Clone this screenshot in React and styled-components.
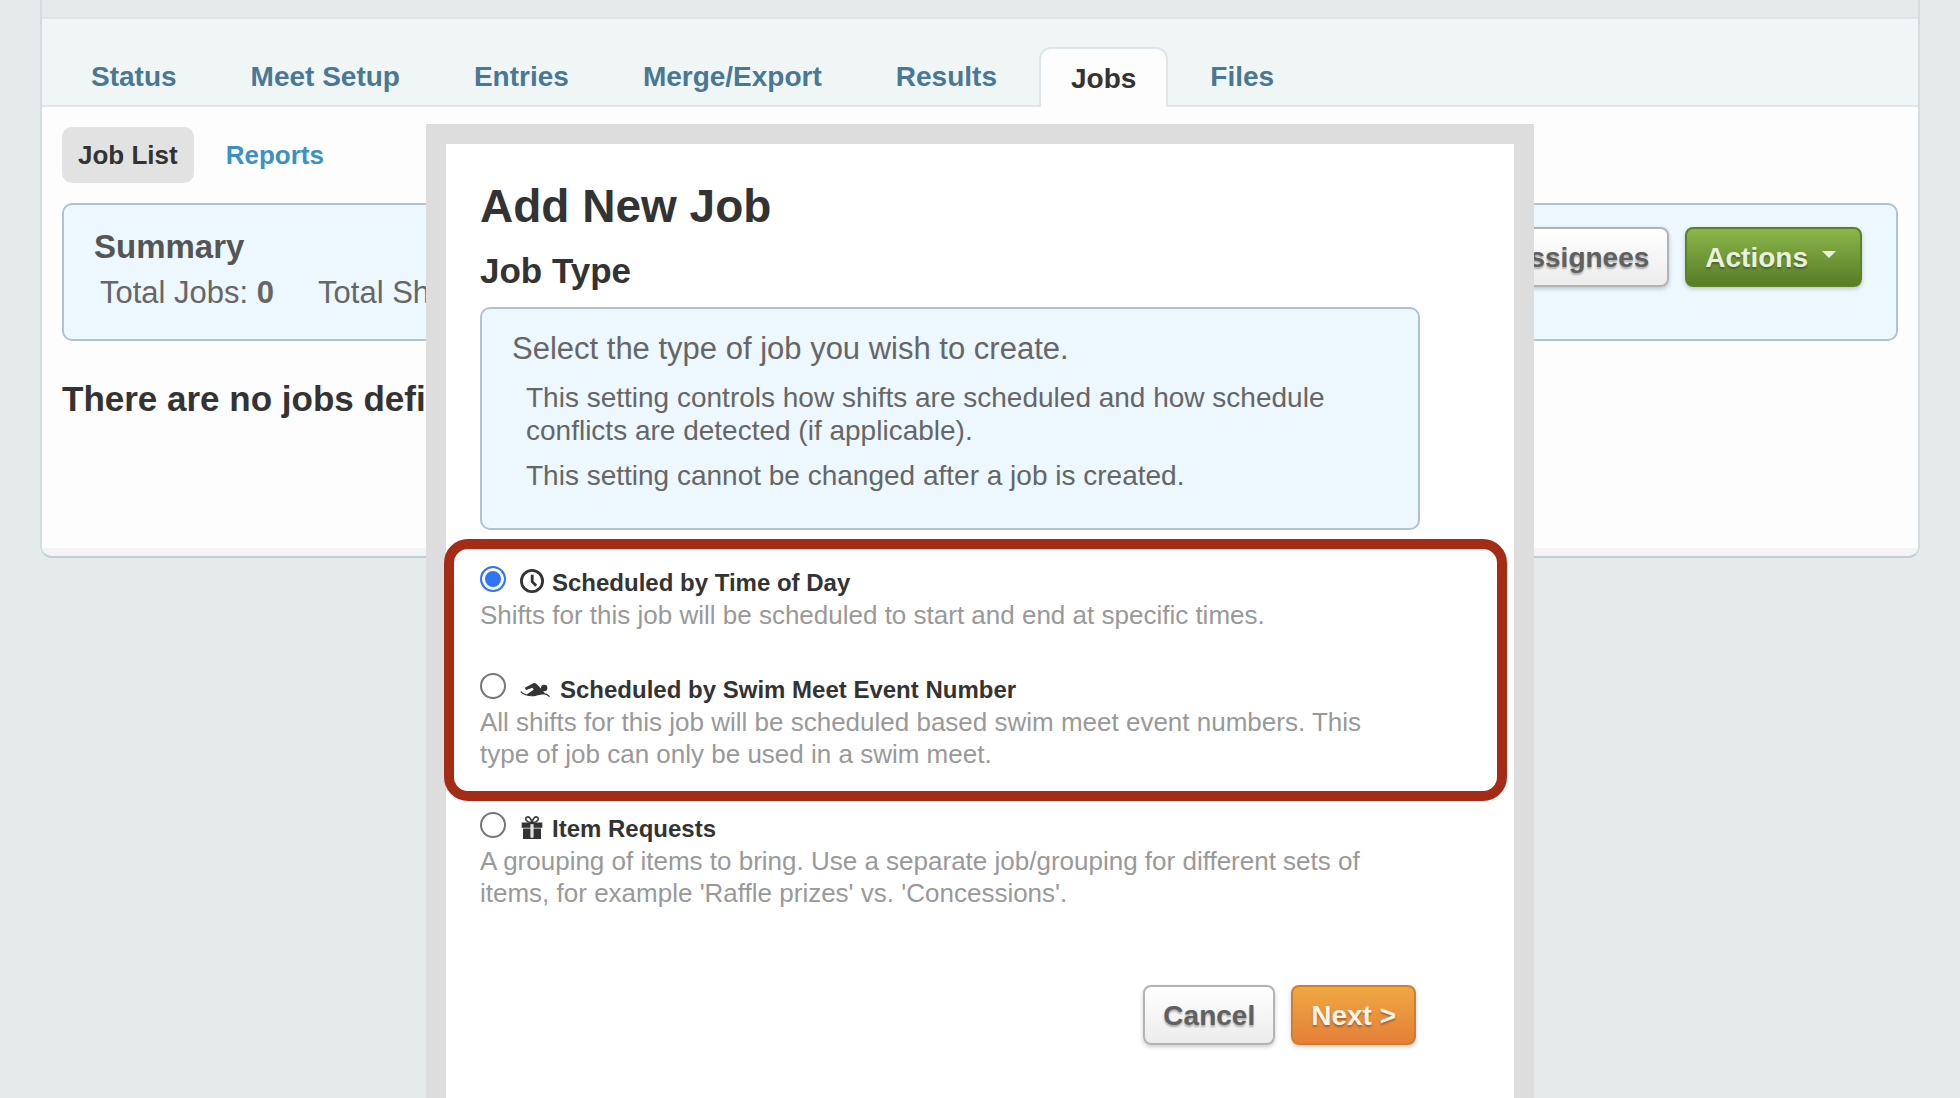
import React, { useState } from "react";
import styled, { createGlobalStyle, css } from "styled-components";

const GlobalStyle = createGlobalStyle`
  *, *::before, *::after { box-sizing: border-box; }
  body {
    margin: 0;
    background: #e5ebea;
    color: #333;
    font-family: "Helvetica Neue", "Liberation Sans", Arial, sans-serif;
  }
  h1, h2, h3, p { margin: 0; }
`;

const Page = styled.div`
  padding: 0 40px;
`;

const Panel = styled.main`
  border: 2px solid #d2dce2;
  border-top: 0;
  border-bottom-color: #c0cfd6;
  border-radius: 0 0 12px 12px;
  background: #fdfdfd;
  overflow: hidden;
`;

const HeaderStrip = styled.div`
  height: 17px;
  background: #e5ebea;
`;

const TabBar = styled.nav`
  display: flex;
  align-items: flex-end;
  gap: 10px;
  padding: 28px 17px 0;
  border-top: 2px solid #dfe5e9;
  border-bottom: 2px solid #dfe5e9;
  background: #f0f6f6;
`;

const Tab = styled.a`
  margin-bottom: -2px;
  padding: 12px 30px 14px;
  border: 2px solid transparent;
  border-bottom: 0;
  border-radius: 12px 12px 0 0;
  color: #497894;
  font-size: 28px;
  font-weight: 700;
  line-height: 32px;
  text-decoration: none;
  white-space: nowrap;
  ${(p) =>
    p.$active &&
    css`
      padding: 14px 30px 12px;
      border-color: #dfe5e9;
      background: #fdfdfd;
      color: #333;
    `}
`;

const Content = styled.div`
  padding: 20px 20px 127px;
`;

const SubNav = styled.nav`
  display: flex;
  gap: 16px;
  margin-bottom: 20px;
`;

const SubLink = styled.a`
  padding: 12px 16px;
  border-radius: 10px;
  background: ${(p) => (p.$active ? "#e2e2e2" : "transparent")};
  color: ${(p) => (p.$active ? "#333" : "#3b92c2")};
  font-size: 26px;
  font-weight: 700;
  line-height: 32px;
  text-decoration: none;
`;

const infoSurface = css`
  border: 2px solid #b0c3d1;
  border-radius: 10px;
  background: #ecf7fe;
`;

const Summary = styled.section`
  ${infoSurface}
  display: flex;
  justify-content: space-between;
  align-items: flex-start;
  padding: 22px 34px 26px 30px;
`;

const SummaryTitle = styled.h3`
  margin-bottom: 6px;
  color: #555;
  font-size: 33px;
  line-height: 40px;
`;

const Totals = styled.div`
  display: flex;
  gap: 44px;
  padding-left: 6px;
  color: #666;
  font-size: 31px;
  line-height: 40px;
`;

const SummaryActions = styled.div`
  display: flex;
  gap: 16px;
`;

const tones = {
  plain: css`
    border-color: #b3b3b3;
    background: linear-gradient(#fff, #ececec);
    color: #606060;
  `,
  green: css`
    border-color: #5a8327;
    background: linear-gradient(#8bb64a, #577d27);
    color: #e9f0dd;
  `,
  orange: css`
    border-color: #cd7f2e;
    background: linear-gradient(#efa842, #e47f38);
    color: #fef3e8;
  `,
};

const Button = styled.button`
  display: flex;
  align-items: center;
  gap: 14px;
  padding: 15px 18px 13px;
  border: 2px solid;
  border-radius: 8px;
  box-shadow: 0 2px 4px rgba(0, 0, 0, 0.2);
  font: 700 28px/28px "Helvetica Neue", "Liberation Sans", Arial, sans-serif;
  text-shadow: 0 2px 2px rgba(0, 0, 0, 0.3);
  cursor: pointer;
  ${(p) => tones[p.$tone]}
`;

const Caret = styled.span`
  margin: 0 6px 8px 0;
  border: 7px solid transparent;
  border-top-color: currentColor;
  border-bottom: 0;
`;

const EmptyMessage = styled.h2`
  margin-top: 36px;
  font-size: 35px;
  line-height: 44px;
`;

const PanelFoot = styled.div`
  height: 8px;
  background: #f4f4f4;
`;

const Overlay = styled.div`
  position: fixed;
  inset: 0;
  display: flex;
  justify-content: center;
  align-items: flex-start;
  padding-top: 124px;
  overflow-y: auto;
  scrollbar-width: none;
`;

const Dialog = styled.form`
  width: min(1108px, 100%);
  padding: 34px 94px 80px 34px;
  border: 20px solid #ddd;
  background: #fff;
`;

const Title = styled.h1`
  margin-bottom: 16px;
  font-size: 46px;
  line-height: 56px;
`;

const Subtitle = styled.h2`
  margin-bottom: 15px;
  font-size: 35px;
  line-height: 42px;
`;

const Note = styled.section`
  ${infoSurface}
  margin-bottom: 36px;
  padding: 20px 30px 36px;
  color: #666;
`;

const NoteLead = styled.p`
  font-size: 31px;
  line-height: 40px;
`;

const NoteText = styled.p`
  margin-top: 12px;
  padding-left: 14px;
  font-size: 28px;
  line-height: 33px;
`;

const Options = styled.div`
  display: grid;
  gap: 42px;
`;

const Highlighted = styled(Options)`
  position: relative;
  &::after {
    content: "";
    position: absolute;
    inset: -27px -87px -31px -36px;
    border: 10px solid #a62b17;
    border-radius: 24px;
    pointer-events: none;
  }
`;

const OptionLabel = styled.label`
  display: flex;
  align-items: flex-start;
  font-size: 24px;
  font-weight: 700;
  line-height: 33px;

  svg {
    flex: none;
    margin: 3px 8px 0 14px;
  }
`;

const Radio = styled.input`
  appearance: none;
  flex: none;
  width: 26px;
  height: 26px;
  margin: 0;
  border: 2px solid #767676;
  border-radius: 50%;
  background: #fff;
  &:checked {
    border-color: #3075f6;
    background: #3075f6;
    box-shadow: inset 0 0 0 3px #fff;
  }
`;

const OptionText = styled.p`
  padding-right: 32px;
  color: #999;
  font-size: 26px;
  line-height: 32px;
`;

const DialogActions = styled.div`
  display: flex;
  justify-content: flex-end;
  gap: 16px;
  margin-top: 76px;
  padding-right: 4px;
`;

const ClockIcon = () => (
  <svg width="24" height="24" viewBox="0 0 24 24" fill="none" stroke="#333" strokeWidth="2.8" aria-hidden="true">
    <circle cx="12" cy="12" r="10.6" />
    <path d="M12.2 5.8v6.8l4 4.2" />
  </svg>
);

const SwimIcon = () => (
  <svg width="32" height="24" viewBox="0 0 32 24" fill="#333" aria-hidden="true">
    <circle cx="24.2" cy="12" r="3.2" />
    <path d="M5.2 11.6 13.4 7.2q1.4-.7 2.6.3l6.2 6.3q1.6 2.2 2.6 3.4-1.8.8-3.6.9l-6 1.2q-4.2.8-8.7-.6 2.5-1.9 5.700-3.900l1.600-1.200-1.500-1.900-6 2.300q-1.700-.700-1.100-2.400Z" />
    <path d="M.8 15.6q2.2 2.6 5 3.1 5 1.7 10 .6 4.6-1.5 7.6-1.7 3.4.1 6.200 3" fill="none" stroke="#333" strokeWidth="1.2" />
  </svg>
);

const GiftIcon = () => (
  <svg width="24" height="24" viewBox="0 0 24 24" fill="#333" aria-hidden="true">
    <path d="M12 7.6C9 7.6 5.8 6.2 5.7 4 5.7 1.9 8.2 1.2 9.7 2.8 11 4.2 11.7 6 12 7.6 12.3 6 13 4.2 14.3 2.8 15.8 1.2 18.3 1.9 18.3 4 18.2 6.2 15 7.6 12 7.6Z" fill="none" stroke="#333" strokeWidth="1.6" />
    <path d="M1.7 7.6h20.6v5.2H1.7zM3 13.5h18V24H3z" />
    <path d="M10.5 9.2h3v13.4h-3z" fill="#fff" />
    <path d="M11.5 9.2h1v13.4h-1z" fill="#ccc" />
  </svg>
);

const tabs = ["Status", "Meet Setup", "Entries", "Merge/Export", "Results", "Jobs", "Files"];

const scheduledOptions = [
  {
    id: "time",
    icon: <ClockIcon />,
    label: "Scheduled by Time of Day",
    text: "Shifts for this job will be scheduled to start and end at specific times.",
  },
  {
    id: "event",
    icon: <SwimIcon />,
    label: "Scheduled by Swim Meet Event Number",
    text: "All shifts for this job will be scheduled based swim meet event numbers. This type of job can only be used in a swim meet.",
  },
];

const itemOption = {
  id: "items",
  icon: <GiftIcon />,
  label: "Item Requests",
  text: "A grouping of items to bring. Use a separate job/grouping for different sets of items, for example 'Raffle prizes' vs. 'Concessions'.",
};

function Option({ option, value, onChange }) {
  return (
    <div>
      <OptionLabel htmlFor={option.id}>
        <Radio
          type="radio"
          name="jobType"
          id={option.id}
          checked={value === option.id}
          onChange={() => onChange(option.id)}
          aria-describedby={`${option.id}-text`}
        />
        {option.icon}
        {option.label}
      </OptionLabel>
      <OptionText id={`${option.id}-text`}>{option.text}</OptionText>
    </div>
  );
}

export default function App() {
  const [jobType, setJobType] = useState("time");

  return (
    <>
      <GlobalStyle />
      <Page>
        <Panel>
          <HeaderStrip />
          <TabBar>
            {tabs.map((name) => (
              <Tab key={name} href="#" $active={name === "Jobs"}>
                {name}
              </Tab>
            ))}
          </TabBar>
          <Content>
            <SubNav>
              <SubLink href="#" $active>
                Job List
              </SubLink>
              <SubLink href="#">Reports</SubLink>
            </SubNav>
            <Summary>
              <div>
                <SummaryTitle>Summary</SummaryTitle>
                <Totals>
                  <span>
                    Total Jobs: <b>0</b>
                  </span>
                  <span>Total Sh</span>
                </Totals>
              </div>
              <SummaryActions>
                <Button type="button" $tone="plain">
                  Assignees
                </Button>
                <Button type="button" $tone="green">
                  Actions
                  <Caret />
                </Button>
              </SummaryActions>
            </Summary>
            <EmptyMessage>There are no jobs defined</EmptyMessage>
          </Content>
          <PanelFoot />
        </Panel>
      </Page>

      <Overlay>
        <Dialog role="dialog" aria-labelledby="dialog-title" onSubmit={(e) => e.preventDefault()}>
          <Title id="dialog-title">Add New Job</Title>
          <Subtitle>Job Type</Subtitle>
          <Note>
            <NoteLead>Select the type of job you wish to create.</NoteLead>
            <NoteText>
              This setting controls how shifts are scheduled and how schedule conflicts are detected (if applicable).
            </NoteText>
            <NoteText>This setting cannot be changed after a job is created.</NoteText>
          </Note>
          <Options>
            <Highlighted>
              {scheduledOptions.map((option) => (
                <Option key={option.id} option={option} value={jobType} onChange={setJobType} />
              ))}
            </Highlighted>
            <Option option={itemOption} value={jobType} onChange={setJobType} />
          </Options>
          <DialogActions>
            <Button type="button" $tone="plain">
              Cancel
            </Button>
            <Button type="submit" $tone="orange">
              Next &gt;
            </Button>
          </DialogActions>
        </Dialog>
      </Overlay>
    </>
  );
}
